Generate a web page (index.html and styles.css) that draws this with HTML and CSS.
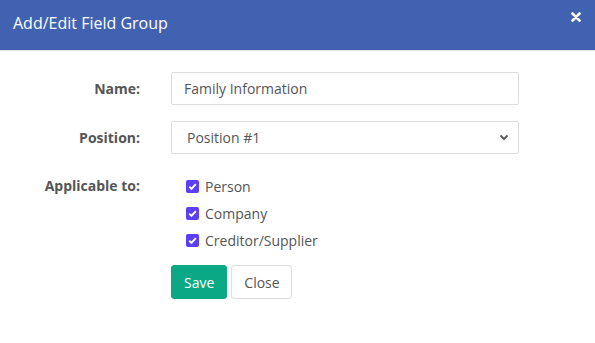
FILE: index.html
```html
<!DOCTYPE html>
<html lang="en">
<head>
    <meta charset="UTF-8">
    <title>Add/Edit Field Group</title>
    <link rel="stylesheet" href="styles.css">
</head>
<body>
<div class="modal">
    <div class="modalHeader">
        <h4 class="modalTitle">Add/Edit Field Group</h4>
        <span class="closeBtn">
            <svg width="10" height="10" viewBox="0 0 10 10"><path d="M1.5 1.5 L8.5 8.5 M8.5 1.5 L1.5 8.5" stroke="#fff" stroke-width="2.6" stroke-linecap="round"/></svg>
        </span>
    </div>
    <div class="modalBody">
        <div class="formRow">
            <label class="fieldLabel">Name:</label>
            <div class="fieldCtl"><input class="textInput" type="text" value="Family Information"></div>
        </div>
        <div class="formRow">
            <label class="fieldLabel">Position:</label>
            <div class="fieldCtl">
                <div class="selectBox">
                    <span>Position #1</span>
                    <svg width="10" height="7" viewBox="0 0 10 7"><path d="M1.5 1.5 L5 5 L8.5 1.5" stroke="#555" stroke-width="1.8" fill="none"/></svg>
                </div>
            </div>
        </div>
        <div class="formRow checkRow">
            <label class="fieldLabel">Applicable to:</label>
            <div class="checkList">
                <div class="checkItem"><span class="checkBox"><svg width="13" height="13" viewBox="0 0 13 13"><path d="M3.2 6.6 L5.5 8.8 L9.8 4.2" stroke="#fff" stroke-width="1.9" fill="none"/></svg></span>Person</div>
                <div class="checkItem"><span class="checkBox"><svg width="13" height="13" viewBox="0 0 13 13"><path d="M3.2 6.6 L5.5 8.8 L9.8 4.2" stroke="#fff" stroke-width="1.9" fill="none"/></svg></span>Company</div>
                <div class="checkItem"><span class="checkBox"><svg width="13" height="13" viewBox="0 0 13 13"><path d="M3.2 6.6 L5.5 8.8 L9.8 4.2" stroke="#fff" stroke-width="1.9" fill="none"/></svg></span>Creditor/Supplier</div>
            </div>
        </div>
        <div class="btnRow">
            <button class="btn btnSave">Save</button>
            <button class="btn btnClose">Close</button>
        </div>
    </div>
</div>
</body>
</html>
```
FILE: styles.css
```css
*{ padding: 0; margin: 0; box-sizing: border-box;}
body{ font-family: "Open Sans", "Noto Sans", sans-serif; font-size: 14px; color: #555; background: #fff;}
.modal{ width: 595px; height: 343px; background: #fff;}
.modalHeader{ height: 51px; background: #4162b0; border-bottom: 1px solid #dfe3ea; display: flex; align-items: center; justify-content: space-between; padding: 0 14px 4px 13px;}
.modalTitle{ color: #fff; font-size: 16px; font-weight: normal;}
.closeBtn{ display: flex; margin-bottom: 12px;}
.modalBody{ padding: 21px 0 0 0;}
.formRow{ display: flex; align-items: center; margin-bottom: 16px;}
.fieldLabel{ width: 140px; text-align: right; font-weight: bold; color: #555;}
.fieldCtl{ margin-left: 31px; width: 348px;}
.textInput{ width: 100%; height: 33px; border: 1px solid #ddd; border-radius: 2px; padding: 0 12px; font-family: inherit; font-size: 14px; color: #555; outline: none;}
.selectBox{ height: 33px; border: 1px solid #ddd; border-radius: 2px; padding: 0 9px 0 15px; display: flex; align-items: center; justify-content: space-between; color: #555;}
.checkRow{ align-items: flex-start; margin-top: 24px; margin-bottom: 15px;}
.checkRow .fieldLabel{ line-height: 18px; margin-top: -1px;}
.checkList{ margin-left: 46px; margin-top: -1px; display: flex; flex-direction: column; gap: 8px;}
.checkItem{ display: flex; align-items: center; height: 19px; color: #555;}
.checkBox{ width: 13px; height: 13px; background: #5b3ff4; border-radius: 2px; display: flex; margin-right: 6px;}
.btnRow{ display: flex; gap: 4px; margin-left: 171px;}
.btn{ height: 34px; font-family: inherit; font-size: 14px; border-radius: 3px; padding: 0 12px; cursor: pointer;}
.btnSave{ background: #0aa884; color: #fff; border: 1px solid #0aa884;}
.btnClose{ background: #fff; color: #555; border: 1px solid #ddd; width: 61px;}
```
